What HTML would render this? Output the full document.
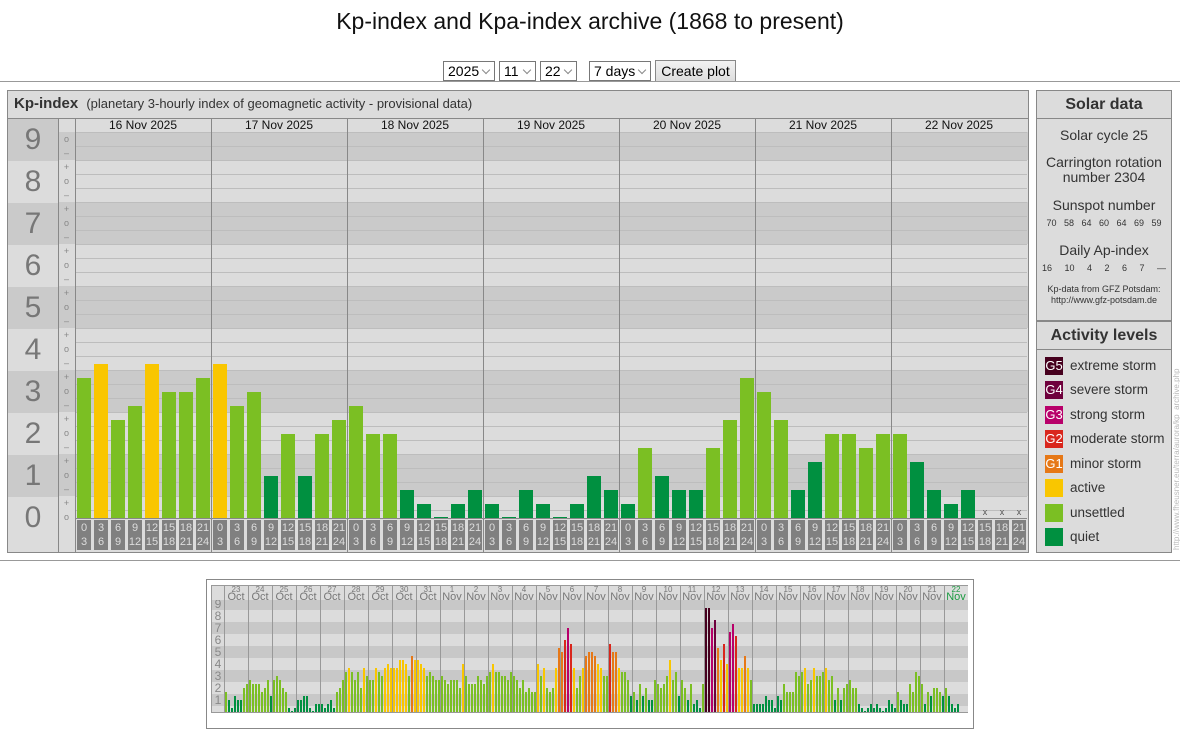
<!DOCTYPE html>
<html><head><meta charset="utf-8">
<style>
*{margin:0;padding:0;box-sizing:border-box}
body{width:1180px;height:718px;overflow:hidden;background:#fff;font-family:"Liberation Sans",sans-serif;position:relative;color:#222}
.a{position:absolute}
#title{left:0;width:1180px;top:8px;text-align:center;font-size:23px;color:#111}
.sel{position:absolute;top:61px;height:20px;border:1px solid #777;background:#fff;font-size:14px;padding:1px 0 0 4px;color:#000}
.sel:after{content:"";position:absolute;right:5px;top:5px;width:5px;height:5px;border-right:1px solid #888;border-bottom:1px solid #888;transform:rotate(45deg)}
.btn{position:absolute;top:60px;left:655px;width:81px;height:22px;border:1px solid #888;background:linear-gradient(#f2f2f2,#ddd);font-size:14px;text-align:center;line-height:20px;color:#000}
.box{position:absolute;border:1px solid #888;background:#dcdcdc}
.rt{font-size:14px;color:#333;text-align:center;position:absolute;left:0;width:100%}
.leg{position:absolute;left:8px;font-size:13.5px;color:#333}
.leg b{position:absolute;left:0;top:0;width:18px;height:18px;color:#fff;font-size:13px;font-weight:normal;text-align:center;line-height:18px}
.leg span{position:absolute;left:25px;top:0;white-space:nowrap;line-height:18px}
</style></head><body>
<div id="title" class="a">Kp-index and Kpa-index archive (1868 to present)</div>
<div class="sel" style="left:443px;width:52px">2025</div>
<div class="sel" style="left:499px;width:37px">11</div>
<div class="sel" style="left:540px;width:37px">22</div>
<div class="sel" style="left:589px;width:62px">7 days</div>
<div class="btn">Create plot</div>
<div class="a" style="left:0;top:81px;width:1180px;height:1px;background:#999"></div>
<div class="a" style="left:0;top:560px;width:1180px;height:1px;background:#999"></div>

<div class="box" id="main" style="left:7px;top:90px;width:1022px;height:463px"></div>

<div class="box" style="left:1036px;top:90px;width:136px;height:231px">
 <div style="height:28px;border-bottom:1px solid #888;text-align:center;font-weight:bold;font-size:16px;line-height:28px;color:#333">Solar data</div>
 <div class="rt" style="top:36px">Solar cycle 25</div>
 <div class="rt" style="top:64px;line-height:15px">Carrington rotation<br>number 2304</div>
 <div class="rt" style="top:106px">Sunspot number</div>
 <div class="rt" style="top:127px;font-size:9px;word-spacing:5px">70 58 64 60 64 69 59</div>
 <div class="rt" style="top:151px">Daily Ap-index</div>
 <div class="rt" style="top:172px;font-size:9px;word-spacing:10px">16 10 4 2 6 7 —</div>
 <div class="rt" style="top:193px;font-size:9px;line-height:11px">Kp-data from GFZ Potsdam:<br>http://www.gfz-potsdam.de</div>
</div>
<div class="box" style="left:1036px;top:321px;width:136px;height:232px">
 <div style="height:28px;border-bottom:1px solid #888;text-align:center;font-weight:bold;font-size:16px;line-height:28px;color:#333">Activity levels</div>
 <div class="leg" style="top:35px"><b style="background:#46001e">G5</b><span>extreme storm</span></div>
 <div class="leg" style="top:59px"><b style="background:#6e003c">G4</b><span>severe storm</span></div>
 <div class="leg" style="top:84px"><b style="background:#b8006a">G3</b><span>strong storm</span></div>
 <div class="leg" style="top:108px"><b style="background:#d9261c">G2</b><span>moderate storm</span></div>
 <div class="leg" style="top:133px"><b style="background:#e67817">G1</b><span>minor storm</span></div>
 <div class="leg" style="top:157px"><b style="background:#f9c600"></b><span>active</span></div>
 <div class="leg" style="top:182px"><b style="background:#7bbf23"></b><span>unsettled</span></div>
 <div class="leg" style="top:206px"><b style="background:#009040"></b><span>quiet</span></div>
</div>
<div class="a" style="left:1172px;top:550px;transform-origin:0 0;transform:rotate(-90deg);font-size:8px;color:#bbb;white-space:nowrap;width:210px">http://www.fheusner.eu/terra/aurora/kp_archive.php</div>

<div class="a" style="left:206px;top:579px;width:768px;height:150px;border:1px solid #888;background:#fff"></div>
<div class="a" id="mini" style="left:211px;top:585px;width:757px;height:128px;border:1px solid #999;background:#dcdcdc"></div>

<script>
(function(){
function col(v){if(v<=4)return"#009040";if(v<=10)return"#7bbf23";if(v<=13)return"#f9c600";if(v<=16)return"#e67817";if(v<=19)return"#d9261c";if(v<=22)return"#b8006a";if(v<=25)return"#6e003c";return"#46001e";}
function d(p,x,y,w,h,bg,extra){var e=document.createElement('div');e.className='a';e.style.cssText='left:'+x+'px;top:'+y+'px;width:'+w+'px;height:'+h+'px;'+(bg?'background:'+bg+';':'')+(extra||'');p.appendChild(e);return e;}
var B=document.body,k,c,tp,bt,t,i,j,v,y,g,hh,s,x0,s2,bx,bh,tb,xx;
var h=d(B,14,95,700,20,null,'font-size:15px;white-space:nowrap;color:#333');
h.innerHTML='<b>Kp-index</b> <span style="font-size:13px;margin-left:4px">(planetary 3-hourly index of geomagnetic activity - provisional data)</span>';
d(B,8,118,1020,1,'#888');
for(k=9;k>=0;k--){c=518-42*k;tp=k==9?119:c-21;bt=k==0?552:c+21;
 d(B,8,tp,50,bt-tp,k%2?'#cacaca':'#dcdcdc');
 t=d(B,8,c-19,50,38,null,'font-size:30px;color:#777;text-align:center;line-height:38px');t.textContent=k;}
var sym=['o','–','+'];
for(i=0;i<28;i++){v=27-i;y=132+14*i;g=Math.round(v/3);
 hh=Math.min(14,519-y);
 d(B,58,y,970,hh,g%2?'#cacaca':'#dcdcdc');
 d(B,75,y,952,1,'#bdbdbd');
 s=d(B,58,y,17,14,null,'font-size:9px;color:#888;text-align:center;line-height:14px');s.textContent=sym[(v%3==0)?0:(v%3==1?2:1)];}
d(B,58,119,970,13,'#dcdcdc');
d(B,58,118,1,434,'#888');d(B,75,118,1,434,'#888');
var days=['16','17','18','19','20','21','22'];
var data=[[10,11,7,8,11,9,9,10],[11,8,9,3,6,3,6,7],[8,6,6,2,1,0,1,2],[1,0,2,1,0,1,3,2],[1,5,3,2,2,5,7,10],[9,7,2,4,6,6,5,6],[6,4,2,1,2,-1,-1,-1]];
for(j=0;j<7;j++){x0=75+136*j;
 t=d(B,x0,118,136,14,null,'font-size:12px;text-align:center;line-height:15px;color:#111');t.textContent=days[j]+' Nov 2025';
 if(j>0)d(B,x0,118,1,434,'#888');
 for(s2=0;s2<8;s2++){bx=x0+2+17*s2;v=data[j][s2];
  if(v>=0){bh=Math.max(1,14*v);d(B,bx,518-bh,14,bh,col(v));}
  else{xx=d(B,bx,507,14,10,null,'font-size:9px;color:#555;text-align:center');xx.textContent='x';}
  tb=d(B,bx,520,14,30,'#808080','font-size:11px;color:#ddd;text-align:center;line-height:14px;padding-top:1px');
  tb.innerHTML=(s2*3)+'<br>'+(s2*3+3);}
}
d(B,75,518,952,1,'#888');
var M=document.getElementById('mini');
var md=[[5,3,1,4,3,3,6,7],[8,7,7,7,5,6,8,4],[8,9,8,6,5,1,0,1],[3,3,4,4,1,0,2,2],[2,1,2,3,1,5,6,8],[10,11,10,8,10,6,11,9],[8,8,11,10,9,11,12,11],[11,11,13,13,12,9,14,13],[13,12,11,9,10,9,8,8],[9,8,7,8,8,8,6,12],[9,7,7,7,9,8,7,9],[10,12,10,10,9,9,8,10],[9,8,6,8,5,6,5,5],[12,9,11,6,5,6,11,16],[15,18,21,17,11,6,9,11],[14,15,15,14,12,11,9,9],[17,15,15,11,10,10,8,4],[5,3,7,4,6,3,3,8],[7,6,7,9,13,8,10,4],[8,6,3,7,2,3,1,7],[26,26,21,23,16,13,17,12],[20,22,19,11,11,14,11,8],[2,2,2,2,4,3,3,1],[4,3,7,5,5,5,10,9],[10,11,7,8,11,9,9,10],[11,8,9,3,6,3,6,7],[8,6,6,2,1,0,1,2],[1,2,1,0,1,3,2,1],[5,3,2,2,7,5,10,9],[7,2,5,4,6,6,5,4],[6,4,2,1,2]];
var mon=[],q;for(q=23;q<=31;q++)mon.push([q,'Oct']);for(q=1;q<=22;q++)mon.push([q,'Nov']);
for(k=9;k>=0;k--){c=712-12*k;tp=Math.max(600,c-6);bt=Math.min(712,c+6);
 d(M,0,tp-586,756,bt-tp,k%2?'#c8c8c8':'#dcdcdc');
 if(k>0){t=d(M,0,c-6-586,12,12,null,'font-size:12px;color:#888;text-align:center;line-height:12px');t.textContent=k;}}
d(M,0,0,756,14,'#dcdcdc');
for(j=0;j<31;j++){x0=12+24*j;
 d(M,x0,0,1,126,'#999');
 var lab=d(M,x0,0,24,15,null,'font-size:8px;line-height:7px;text-align:center;color:'+(j==30?'#1a9a40':'#777'));
 lab.innerHTML=mon[j][0]+'<br><span style="font-size:11px;line-height:9px">'+mon[j][1]+'</span>';
 for(s2=0;s2<md[j].length;s2++){v=md[j][s2];bh=Math.max(1,4*v);d(M,x0+1+3*s2,126-bh,2,bh,col(v));}
}
})();
</script>
</body></html>
